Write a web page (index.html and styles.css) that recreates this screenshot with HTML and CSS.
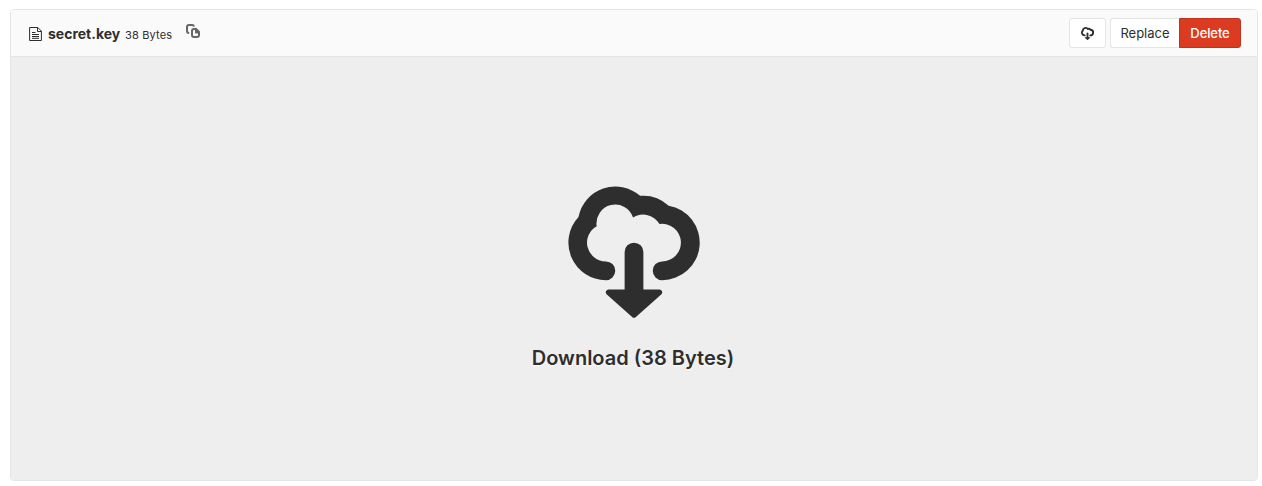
FILE: index.html
```
<!DOCTYPE html>
<html lang="en">
<head>
<meta charset="utf-8">
<title>secret.key</title>
<link rel="stylesheet" href="styles.css">
</head>
<body>
<svg class="defs" aria-hidden="true">
<symbol id="cloud" viewBox="0 0 16 16"><path d="M5 11A4 4 0 0 1 2.08 4.27A4 4 0 0 1 8.65 2.01A4 4 0 0 1 11.7 3.06A4 4 0 0 1 11 11A1 1 0 0 1 11 9A2 2 0 1 0 10.72 5.02A2 2 0 0 0 7.9 4.33A2 2 0 0 0 4.02 5.25A2 2 0 0 0 5 9A1 1 0 0 1 5 11ZM7 12V8a1 1 0 0 1 2 0v4h1.7a.3.3 0 0 1 .2.53L8.2 14.92a.3.3 0 0 1-.4 0L5.1 12.53A.3.3 0 0 1 5.3 12Z"/></symbol>
</svg>
<article class="file">
  <header class="file-header">
    <div class="file-info">
      <svg class="doc-icon" viewBox="0 0 13 14" fill="none" stroke="currentColor"><path d="M.6.5h8.2l3.6 3.6v9.4H.6zM8.5.5v4h4M3 5.5h3.5M3 7.5h7M3 9.5h7M3 11.3h7"/></svg>
      <strong class="file-name">secret.key</strong>
      <small class="file-size">38 Bytes</small>
      <button class="copy" aria-label="Copy file path"><svg class="copy-icon" viewBox="0 0 14 14" fill="none" stroke="currentColor" stroke-width="2"><path d="M3.2 9H3a2 2 0 0 1-2-2V3a2 2 0 0 1 2-2h3a2 2 0 0 1 2 1.6"/><path d="M8 5h2.2L13 7.8V11a2 2 0 0 1-2 2H8a2 2 0 0 1-2-2V7a2 2 0 0 1 2-2z"/><path fill="currentColor" stroke="none" d="M9 5h1.6L13 7.5V9.5h-3a1 1 0 0 1-1-1z"/></svg></button>
    </div>
    <div class="actions">
      <button class="btn btn-icon" aria-label="Download"><svg class="small-cloud"><use href="#cloud"/></svg></button>
      <div class="btn-group">
        <button class="btn btn-replace">Replace</button>
        <button class="btn btn-delete">Delete</button>
      </div>
    </div>
  </header>
  <a class="download">
    <svg class="big-cloud"><use href="#cloud"/></svg>
    <span class="download-label">Download (38 Bytes)</span>
  </a>
</article>
</body>
</html>
```
FILE: styles.css
```
* { box-sizing: border-box; }
body { margin: 0; padding: 9px 4px 5px 10px; background: #fff; color: #2e2e2e; font-family: Inter, "Noto Sans", sans-serif; overflow: hidden; }
.defs { display: none; }
.file { height: 472px; border: 1px solid #e5e5e5; border-radius: 4px; overflow: hidden; display: flex; flex-direction: column; }
.file-header { flex: none; height: 47px; background: #fafafa; border-bottom: 1px solid #e5e5e5; padding: 0 16px 0 18px; display: flex; align-items: center; justify-content: space-between; }
.file-info { display: flex; align-items: baseline; line-height: 20px; padding-top: 2px; }
.doc-icon { width: 13px; height: 14px; margin-right: 6px; align-self: center; }
.file-name { width: 73px; font-size: 14px; font-weight: 700; white-space: nowrap; }
.file-size { width: 48px; font-size: 11px; margin-left: 4px; letter-spacing: .15px; white-space: nowrap; }
.copy { border: 0; padding: 0; background: none; color: #666; margin-left: 13px; align-self: flex-start; height: 14px; display: flex; }
.copy-icon { width: 14px; height: 14px; }
.actions { display: flex; gap: 4px; }
.btn-group { display: flex; }
.btn { height: 30px; border: 1px solid #e5e5e5; border-radius: 3px; background: #fff; color: #2e2e2e; font: 400 13px/18px Inter, "Noto Sans", sans-serif; padding: 0; display: flex; align-items: center; justify-content: center; }
.btn-icon { width: 37px; }
.btn-replace { width: 69px; border-right: 0; border-radius: 3px 0 0 3px; }
.btn-delete { width: 62px; color: #fff; background: #db3b21; border-color: #c0341d; font-weight: 500; letter-spacing: -.1px; border-radius: 0 3px 3px 0; }
.small-cloud { width: 15px; height: 15px; fill: #2e2e2e; }
.download { flex: 1; background: #eee; display: flex; flex-direction: column; align-items: center; padding-top: 120px; }
.big-cloud { width: 150px; height: 150px; fill: #2e2e2e; }
.download-label { margin-top: 17px; margin-right: 2px; font-size: 20px; line-height: 28px; font-weight: 600; text-shadow: 0 1px 2px #fff; }
```
